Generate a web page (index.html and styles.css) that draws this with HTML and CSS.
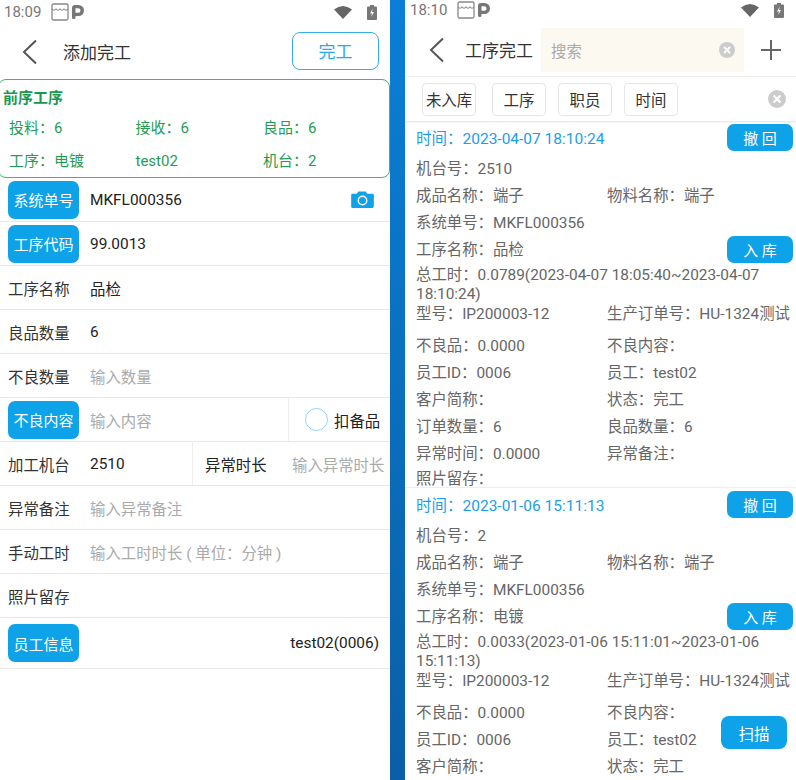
FILE: index.html
```html
<!DOCTYPE html>
<html lang="zh">
<head>
<meta charset="utf-8">
<title>工序完工</title>
<link rel="stylesheet" href="styles.css">
</head>
<body>
<div class="screen">
  <section class="left">
    <div class="status">
      <span class="clock">18:09</span>
      <svg class="ni" viewBox="0 0 18 18"><path d="M2.500 1h13A1.500 1.500 0 0 1 17 2.500v13a1.500 1.500 0 0 1-1.500 1.500h-13A1.500 1.500 0 0 1 1 15.500v-13A1.500 1.500 0 0 1 2.500 1z" fill="none" stroke="#888" stroke-width="1.300"/><path d="M1 6q2 2.500 4 0q2 2.500 4 0q2 2.500 4 0q2 2.500 4 0" fill="none" stroke="#888" stroke-width="1.200"/></svg>
      <svg class="pi" viewBox="0 0 12 14"><path d="M0 3a3 3 0 0 1 3-3h3.500a5.500 5.500 0 0 1 0 11H3.500v1.500A1.500 1.500 0 0 1 2 14H1.500A1.500 1.500 0 0 1 0 12.500zM3.500 3.200V7.800h2.700a2.300 2.300 0 0 0 0-4.600z" fill="#777" fill-rule="evenodd"/></svg>
      <span class="grow"></span>
      <svg class="wifi" viewBox="0 0 18 13"><path d="M0 3.500Q9-3.500 18 3.500L9 13z" fill="#666"/></svg>
      <svg class="batt" viewBox="0 0 10 15"><path d="M3 0h4v1.500h2a1 1 0 0 1 1 1V14a1 1 0 0 1-1 1H1a1 1 0 0 1-1-1V2.500a1 1 0 0 1 1-1h2z" fill="#777"/><path d="M5.800 3.500L3 8.500h2l-.8 3.500L7 7H5z" fill="#fff"/></svg>
    </div>
    <header class="lhead">
      <svg class="back" viewBox="0 0 16 26"><path d="M14 1.500L2 13l12 11.500" fill="none" stroke="#555" stroke-width="2"/></svg>
      <h1 class="title">添加完工</h1>
      <button class="done">完工</button>
    </header>
    <div class="prev">
      <div class="prev-title">前序工序</div>
      <div class="prev-row"><span>投料：6</span><span>接收：6</span><span>良品：6</span></div>
      <div class="prev-row"><span>工序：电镀</span><span>test02</span><span>机台：2</span></div>
    </div>
    <div class="row"><span class="tag">系统单号</span><span class="val">MKFL000356</span><span class="grow"></span>
      <svg class="cam" viewBox="0 0 24 18"><path d="M1.500 3H6l1.500-2.500h8L17 3h5.500A1.500 1.500 0 0 1 24 4.500v12a1.500 1.500 0 0 1-1.500 1.500h-21A1.500 1.500 0 0 1 0 16.500v-12A1.500 1.500 0 0 1 1.500 3z" fill="#0ea2e8"/><circle cx="12" cy="10" r="4.500" fill="none" stroke="#fff" stroke-width="1.500"/></svg>
    </div>
    <div class="row"><span class="tag">工序代码</span><span class="val">99.0013</span></div>
    <div class="row"><span class="lab">工序名称</span><span class="val">品检</span></div>
    <div class="row"><span class="lab">良品数量</span><span class="val">6</span></div>
    <div class="row"><span class="lab">不良数量</span><span class="ph">输入数量</span></div>
    <div class="row split">
      <div class="cell c1"><span class="tag">不良内容</span><span class="ph">输入内容</span></div>
      <div class="cell c2"><span class="radio"></span><span class="dark">扣备品</span></div>
    </div>
    <div class="row split">
      <div class="cell c3"><span class="lab">加工机台</span><span class="val">2510</span></div>
      <div class="cell c4"><span class="dark lab4">异常时长</span><span class="ph ph4">输入异常时长</span></div>
    </div>
    <div class="row"><span class="lab">异常备注</span><span class="ph">输入异常备注</span></div>
    <div class="row"><span class="lab">手动工时</span><span class="ph">输入工时时长 ( 单位：分钟 )</span></div>
    <div class="row"><span class="lab">照片留存</span></div>
    <div class="row tall"><span class="tag">员工信息</span><span class="grow"></span><span class="dark">test02(0006)</span></div>
  </section>
  <div class="divider"></div>
  <section class="right">
    <div class="status rstatus">
      <span class="clock">18:10</span>
      <svg class="ni" viewBox="0 0 18 18"><path d="M2.500 1h13A1.500 1.500 0 0 1 17 2.500v13a1.500 1.500 0 0 1-1.500 1.500h-13A1.500 1.500 0 0 1 1 15.500v-13A1.500 1.500 0 0 1 2.500 1z" fill="none" stroke="#888" stroke-width="1.300"/><path d="M1 6q2 2.500 4 0q2 2.500 4 0q2 2.500 4 0q2 2.500 4 0" fill="none" stroke="#888" stroke-width="1.200"/></svg>
      <svg class="pi" viewBox="0 0 12 14"><path d="M0 3a3 3 0 0 1 3-3h3.500a5.500 5.500 0 0 1 0 11H3.500v1.500A1.500 1.500 0 0 1 2 14H1.500A1.500 1.500 0 0 1 0 12.500zM3.500 3.200V7.800h2.700a2.300 2.300 0 0 0 0-4.600z" fill="#777" fill-rule="evenodd"/></svg>
      <span class="grow"></span>
      <svg class="wifi" viewBox="0 0 18 13"><path d="M0 3.500Q9-3.500 18 3.500L9 13z" fill="#666"/></svg>
      <svg class="batt" viewBox="0 0 10 15"><path d="M3 0h4v1.500h2a1 1 0 0 1 1 1V14a1 1 0 0 1-1 1H1a1 1 0 0 1-1-1V2.500a1 1 0 0 1 1-1h2z" fill="#777"/><path d="M5.800 3.500L3 8.500h2l-.8 3.500L7 7H5z" fill="#fff"/></svg>
    </div>
    <header class="rhead">
      <svg class="back" viewBox="0 0 16 26"><path d="M14 1.500L2 13l12 11.500" fill="none" stroke="#555" stroke-width="2"/></svg>
      <h1 class="title rtitle">工序完工</h1>
      <div class="search"><span class="sph">搜索</span><span class="grow"></span>
        <svg class="x sx" viewBox="0 0 16 16"><circle cx="8" cy="8" r="8" fill="#ccc"/><path d="M5 5l6 6M11 5l-6 6" stroke="#fff" stroke-width="2"/></svg>
      </div>
      <svg class="plus" viewBox="0 0 20 20"><path d="M10 0v20M0 10h20" stroke="#666" stroke-width="2"/></svg>
    </header>
    <div class="filters">
      <span class="chip">未入库</span><span class="chip">工序</span><span class="chip">职员</span><span class="chip">时间</span>
      <span class="grow"></span>
      <svg class="x fx" viewBox="0 0 18 18"><circle cx="9" cy="9" r="9" fill="#ccc"/><path d="M5.500 5.500l7 7M12.500 5.500l-7 7" stroke="#fff" stroke-width="2.200"/></svg>
    </div>
    <div class="list">
      <article class="card">
        <div class="ctop"><span class="time">时间：2023-04-07 18:10:24</span><button class="act">撤 回</button></div>
        <div class="line l1">机台号：2510</div>
        <div class="line two"><span>成品名称：端子</span><span>物料名称：端子</span></div>
        <div class="line">系统单号：MKFL000356</div>
        <div class="line named"><span>工序名称：品检</span><button class="act">入 库</button></div>
        <div class="wrap">总工时：0.0789(2023-04-07 18:05:40~2023-04-07 18:10:24)</div>
        <div class="line two model"><span>型号：IP200003-12</span><span>生产订单号：HU-1324测试</span></div>
        <div class="line two l2"><span>不良品：0.0000</span><span>不良内容：</span></div>
        <div class="line two"><span>员工ID：0006</span><span>员工：test02</span></div>
        <div class="line two"><span>客户简称：</span><span>状态：完工</span></div>
        <div class="line two"><span>订单数量：6</span><span>良品数量：6</span></div>
        <div class="line two"><span>异常时间：0.0000</span><span>异常备注：</span></div>
        <div class="line last">照片留存：</div>
      </article>
      <article class="card">
        <div class="ctop"><span class="time">时间：2023-01-06 15:11:13</span><button class="act">撤 回</button></div>
        <div class="line l1">机台号：2</div>
        <div class="line two"><span>成品名称：端子</span><span>物料名称：端子</span></div>
        <div class="line">系统单号：MKFL000356</div>
        <div class="line named"><span>工序名称：电镀</span><button class="act">入 库</button></div>
        <div class="wrap">总工时：0.0033(2023-01-06 15:11:01~2023-01-06 15:11:13)</div>
        <div class="line two model"><span>型号：IP200003-12</span><span>生产订单号：HU-1324测试</span></div>
        <div class="line two l2"><span>不良品：0.0000</span><span>不良内容：</span></div>
        <div class="line two"><span>员工ID：0006</span><span>员工：test02</span></div>
        <div class="line two"><span>客户简称：</span><span>状态：完工</span></div>
      </article>
      <button class="scan">扫描</button>
    </div>
  </section>
</div>
</body>
</html>
```

FILE: styles.css
```css
* { box-sizing: border-box; }
html, body { margin: 0; height: 100%; overflow: hidden; }
body { background: #fff; font-family: Roboto, "Noto Sans CJK SC", sans-serif; font-size: 15.400px; color: #222; }
button { font-family: inherit; border: 0; padding: 0; }
.screen { display: flex; width: 796px; height: 780px; overflow: hidden; }
.left { width: 390px; flex: none; }
.divider { width: 15px; flex: none; background: linear-gradient(#0a7fd6, #0a5fa6); }
.right { width: 391px; flex: none; position: relative; overflow: hidden; }
.grow { flex: 1; }

.status { display: flex; align-items: center; height: 24px; padding: 0 13px 0 4px; color: #777; }
.clock { font-size: 15px; color: #777; width: 46px; }
.ni { width: 18px; height: 18px; margin-left: 1px; }
.pi { width: 12px; height: 14px; margin-left: 3px; }
.wifi { width: 18px; height: 13px; }
.batt { width: 10px; height: 15px; margin-left: 15px; }
.rstatus { height: 20px; padding: 0 12px 0 5px; }

.lhead { display: flex; align-items: center; height: 55px; padding: 0 11px 0 22px; }
.back { width: 16px; height: 26px; flex: none; }
.title { margin: 0; font-size: 17px; font-weight: 400; color: #333; }
.lhead .title { margin-left: 25px; flex: 1; }
.done { width: 87px; height: 38px; background: #fff; border: 1.500px solid #35aeee; border-radius: 8px; font-size: 17px; color: #2aa8ec; margin-top: -2px; }

.prev { height: 99px; border: 1px solid #46b36e; border-radius: 8px; margin: 0 0 0 -2px; padding: 7px 0 0 4px; color: #1f9d55; font-size: 15px; }
.prev-title { font-size: 15px; font-weight: 700; line-height: 22px; color: #1a9850; }
.prev-row { display: grid; grid-template-columns: 126.500px 127.500px 1fr; padding-left: 6px; line-height: 22px; margin-top: 11px; }
.prev-title + .prev-row { margin-top: 8px; }

.row { display: flex; align-items: center; height: 44px; border-bottom: 1px solid #e8e8e8; padding: 0 11px 0 8px; }
.tag { width: 71px; height: 38px; flex: none; display: flex; align-items: center; justify-content: center; background: #0ea2e8; border-radius: 7px; color: #fff; font-size: 15px; }
.lab { width: 71px; flex: none; color: #333; }
.val { margin-left: 11px; color: #222; }
.ph { margin-left: 11px; color: #aaa; }
.dark { color: #222; }
.cam { width: 23px; height: 17px; margin-right: 5px; }
.split { padding: 0; }
.cell { display: flex; align-items: center; height: 100%; }
.c1 { width: 289px; padding-left: 8px; border-right: 1px solid #eee; }
.c2 { flex: 1; padding-left: 16px; }
.radio { width: 23px; height: 23px; border-radius: 50%; border: 1.500px solid #8ed2f6; margin-right: 6px; }
.c3 { width: 193px; padding-left: 8px; border-right: 1px solid #eee; }
.c4 { flex: 1; padding-left: 12px; }
.lab4 { width: 71px; flex: none; }
.ph4 { margin-left: 16px; white-space: nowrap; }
.tall { height: 51px; }

.rhead { display: flex; align-items: center; height: 57px; padding: 0 0 0 24px; border-bottom: 1px solid #eee; }
.rhead .back, .search, .plus { margin-top: 3px; }
.rtitle { margin-top: 2px; margin-left: 20px; width: 75px; flex: none; white-space: nowrap; }
.search { display: flex; align-items: center; width: 203px; height: 44px; margin-left: 1px; padding: 0 9px 0 10px; background: #fcf9f1; flex: none; }
.sph { color: #aaa; }
.x { flex: none; }
.sx { width: 16px; height: 16px; }
.plus { width: 20px; height: 20px; margin-left: 17px; flex: none; }
.filters { display: flex; align-items: center; gap: 12px; height: 44px; padding: 0 10px 0 17px; box-shadow: 0 1px 2px rgba(0,0,0,.12); position: relative; }
.chip { width: 54px; height: 33px; display: flex; align-items: center; justify-content: center; border: 1px solid #e6e6e6; border-radius: 4px; color: #333; background: #fff; }
.chip:first-child { margin-right: 4px; }
.fx { width: 18px; height: 18px; }

.list { position: relative; }
.card { padding: 2px 3px 0 11px; border-bottom: 1px solid #eee; color: #666; }
.ctop { display: flex; justify-content: space-between; align-items: center; height: 28px; }
.time { color: #18a0ea; font-size: 15.500px; margin-top: -1px; }
.act { width: 66px; height: 27px; background: #0ea2e8; border-radius: 7px; color: #fff; font-size: 15px; flex: none; }
.line { line-height: 20px; padding: 3.500px 0; white-space: nowrap; }
.l1 { margin-top: 4px; }
.two { display: grid; grid-template-columns: 191px 1fr; }
.named { display: flex; justify-content: space-between; align-items: center; height: 27px; padding: 0; }
.wrap { line-height: 19px; margin-top: 3px; width: 362px; }
.model { padding: 0; }
.l2 { margin-top: 8px; }
.last { padding: 0; margin-top: 2px; height: 18px; }
.scan { position: absolute; left: 316px; top: 595px; width: 66px; height: 33px; border-radius: 8px; background: #0ea2e8; color: #fff; font-size: 15.500px; }
```
